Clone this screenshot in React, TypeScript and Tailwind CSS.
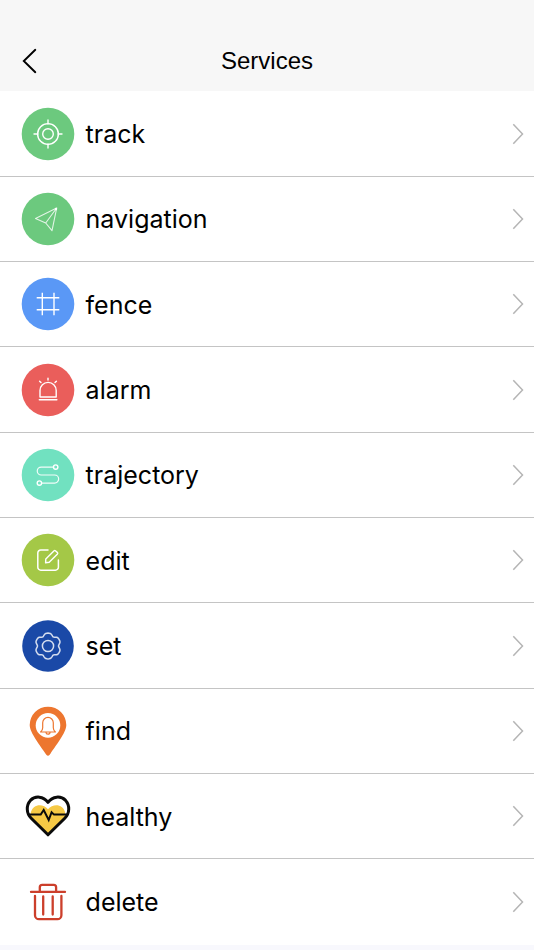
import React from 'react';
import type { ReactNode } from 'react';

const GEAR_POINTS = Array.from({ length: 72 }, (_, i) => {
  const angle = (i * 5 * Math.PI) / 180;
  const radius = 12 + 1.2 * Math.cos(6 * angle) - 0.3 * Math.cos(12 * angle);
  return `${(radius * Math.sin(angle)).toFixed(2)},${(-radius * Math.cos(angle)).toFixed(2)}`;
}).join(' ');

const Icon = ({ children }: { children: ReactNode }) => (
  <svg
    viewBox="-27 -27 54 54"
    className="h-[54px] w-[54px] shrink-0"
    fill="none"
    stroke="#fff"
    strokeWidth="1.4"
    strokeLinecap="round"
    strokeLinejoin="round"
  >
    {children}
  </svg>
);

const Disc = ({ color, r = 26.3 }: { color: string; r?: number }) => (
  <circle r={r} fill={color} stroke="none" />
);

const services = [
  {
    label: 'track',
    icon: (
      <Icon>
        <Disc color="#6cc97e" />
        <circle r="5.3" />
        <circle r="10.4" />
        <path d="M0-14v4M0 10v4M-14 0h4M10 0h4" />
      </Icon>
    ),
  },
  {
    label: 'navigation',
    icon: (
      <Icon>
        <Disc color="#6cc97e" />
        <path d="M8.7-11-12.5-.4-2.3 4 4 11.7ZM8.7-11-2.3 4" strokeWidth="1.1" opacity="0.8" />
        <circle cx="8" cy="-10" r="1.2" fill="#fff" stroke="none" />
      </Icon>
    ),
  },
  {
    label: 'fence',
    icon: (
      <Icon>
        <Disc color="#5a98f6" />
        <path d="M-5.7-11.2v22.4M6-11.2v22.4M-11.3-6.3h22.6M-11.3 5.7h22.6" strokeLinecap="butt" />
      </Icon>
    ),
  },
  {
    label: 'alarm',
    icon: (
      <Icon>
        <Disc color="#ea5e5b" />
        <path d="M-8 7V.5a8.1 8.1 0 0 1 16.2 0V7ZM-8.7 9.8H8.9M0-11.7v1.8M-8.4-8.8l1.4 1.4M8.4-8.8 7-7.4" />
      </Icon>
    ),
  },
  {
    label: 'trajectory',
    icon: (
      <Icon>
        <Disc color="#71e1c0" />
        <path d="M5.4-7.9H-6.8a3.95 3.95 0 0 0 0 7.9H6.6a4.05 4.05 0 0 1 0 8.1H-6.2" strokeWidth="1.2" opacity="0.9" />
        <circle cx="7.7" cy="-7.9" r="2.2" />
        <circle cx="-8.6" cy="8.1" r="2.2" />
      </Icon>
    ),
  },
  {
    label: 'edit',
    icon: (
      <Icon>
        <Disc color="#a4c847" />
        <path d="M0-10h-7.2a3 3 0 0 0-3 3V7.2a3 3 0 0 0 3 3H7.4a3 3 0 0 0 3-3V0" strokeWidth="1.5" />
        <path d="M-2.4 2.8-2.2-.9 6.1-9.2a1 1 0 0 1 1.3 0L9.5-7.4a1 1 0 0 1 0 1.3L1.2 2.3Z" />
      </Icon>
    ),
  },
  {
    label: 'set',
    icon: (
      <Icon>
        <Disc color="#1a49a7" r={25.8} />
        <polygon points={GEAR_POINTS} strokeWidth="1.5" opacity="0.82" />
        <circle r="5.6" strokeWidth="1.5" opacity="0.82" />
      </Icon>
    ),
  },
  {
    label: 'find',
    icon: (
      <Icon>
        <path
          d="M0 24.7C-1.2 24.7-1.8 23.5-2.6 22.4-7 15.5-18.3 1.8-18.3-6a18.3 18.3 0 0 1 36.6 0C18.3 1.8 7 15.5 2.6 22.4 1.8 23.5 1.2 24.7 0 24.7Z"
          fill="#ed762f"
          stroke="none"
        />
        <circle cy="-5.6" r="12.3" fill="#fff" stroke="none" />
        <path
          d="M-7.4 1H7.4C5.8-.4 5.3-1.3 5.3-3.3V-8.3a5.3 5.3 0 0 0-10.6 0v5C-5.3-1.3-5.8-.4-7.4 1ZM-2 1.6a2 1.6 0 0 0 4 0"
          stroke="#ed762f"
          strokeWidth="1.2"
        />
      </Icon>
    ),
  },
  {
    label: 'healthy',
    icon: (
      <Icon>
        <path
          d="M0 18.5-16.5 2C-18.6-1-17-6.5-14-8.8-9-12.4-3.5-10.4 0-6.8 3.5-10.4 9-12.4 14-8.8 17-6.5 18.6-1 16.5 2Z"
          fill="#f6c945"
          stroke="none"
        />
        <path
          d="M0 18.8-16.8 2.3C-21.8-2.6-22-10.8-17.6-15.6-12.8-20.5-4.6-20 0-13.6 4.6-20 12.8-20.5 17.6-15.6 22-10.8 21.8-2.6 16.8 2.3Z"
          stroke="#0b0b0b"
          strokeWidth="3"
        />
        <path d="M-18.5-1.4h11.2L-4.3-6 .7 4 3.6-3.8 6-1.4H18.5" stroke="#0b0b0b" strokeWidth="2" strokeLinejoin="miter" />
      </Icon>
    ),
  },
  {
    label: 'delete',
    icon: (
      <Icon>
        <path
          d="M-17-10.1h34M-8.2-10.5v-4.2a2.4 2.4 0 0 1 2.4-2.4h11.5a2.4 2.4 0 0 1 2.4 2.4v4.2M-13-6V13.2a4 4 0 0 0 4 4H9.4a4 4 0 0 0 4-4V-6M-4.8-5.5v18M4.7-5.5v18"
          stroke="#cc3f2b"
          strokeWidth="2.3"
        />
      </Icon>
    ),
  },
];

export default function App() {
  return (
    <div className="h-[950px] w-full overflow-hidden bg-[#f8f8fd] font-['Inter','Liberation_Sans',sans-serif] text-black">
      <header className="grid h-[91.4px] grid-cols-[60px_1fr_60px] items-center bg-[#f7f7f7] pt-[30px]">
        <svg viewBox="0 0 16 26" className="ml-[22px] h-[26px] w-4" fill="none" stroke="#000" strokeWidth="1.9" strokeLinecap="round">
          <path d="M13.3 1.8 1.8 13l11.5 11.2" />
        </svg>
        <h1 className="text-center font-['Liberation_Sans',sans-serif] text-2xl">Services</h1>
      </header>

      <ul>
        {services.map(({ label, icon }) => (
          <li key={label} className="flex h-[85.33px] items-center border-b border-[#c4c4c4] bg-white pr-[10px] pl-[21px] last:border-transparent">
            {icon}
            <span className="ml-[10.6px] flex-1 pt-[2.5px] text-[25px] font-[380]">{label}</span>
            <svg viewBox="0 0 12 22" className="h-[22px] w-3" fill="none" stroke="#b5b5b5" strokeWidth="1.5">
              <path d="m1.3 1.2 9.2 9.8-9.2 9.8" />
            </svg>
          </li>
        ))}
      </ul>
    </div>
  );
}
